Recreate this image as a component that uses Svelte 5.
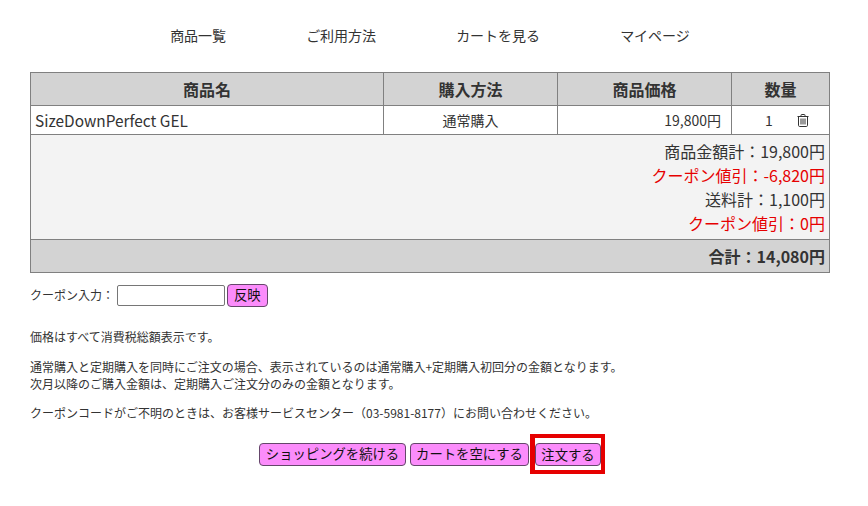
<script>
	let coupon = $state('');
</script>

<div class="page">
	<nav>
		<a href="#list">商品一覧</a>
		<a href="#guide">ご利用方法</a>
		<a href="#cart">カートを見る</a>
		<a href="#mypage">マイページ</a>
	</nav>

	<table>
		<colgroup>
			<col class="c1" />
			<col class="c2" />
			<col class="c3" />
			<col class="c4" />
		</colgroup>
		<thead>
			<tr>
				<th>商品名</th>
				<th>購入方法</th>
				<th>商品価格</th>
				<th>数量</th>
			</tr>
		</thead>
		<tbody>
			<tr class="item">
				<td class="name">SizeDownPerfect GEL</td>
				<td class="center">通常購入</td>
				<td class="right">19,800円</td>
				<td>
					<div class="qty">
						<span>1</span>
						<svg viewBox="0 0 12 13" width="12" height="13" fill="none" stroke="#333" stroke-width="1" aria-hidden="true">
							<path d="M0.5 2.5h11M4 2.5V1.2Q4 .5 4.7 .5h2.6Q8 .5 8 1.2v1.3M1.5 2.5v8.8q0 1.2 1.2 1.2h6.6q1.2 0 1.2-1.2V2.5M4 4.5v6M6 4.5v6M8 4.5v6" />
						</svg>
					</div>
				</td>
			</tr>
			<tr class="summary">
				<td colspan="4">
					<div>商品金額計：19,800円</div>
					<div class="red">クーポン値引：-6,820円</div>
					<div>送料計：1,100円</div>
					<div class="red">クーポン値引：0円</div>
				</td>
			</tr>
			<tr class="total">
				<td colspan="4">合計：14,080円</td>
			</tr>
		</tbody>
	</table>

	<div class="coupon">
		<label for="coupon">クーポン入力：</label>
		<input id="coupon" type="text" bind:value={coupon} />
		<button>反映</button>
	</div>

	<div class="notes">
		<p>価格はすべて消費税総額表示です。</p>
		<p>通常購入と定期購入を同時にご注文の場合、表示されているのは通常購入+定期購入初回分の金額となります。<br />次月以降のご購入金額は、定期購入ご注文分のみの金額となります。</p>
		<p>クーポンコードがご不明のときは、お客様サービスセンター（03-5981-8177）にお問い合わせください。</p>
	</div>

	<div class="actions">
		<button class="keep">ショッピングを続ける</button>
		<button class="empty">カートを空にする</button>
		<span class="highlight"><button class="order">注文する</button></span>
	</div>
</div>

<style>
	:global(body) {
		margin: 0;
		background: #fff;
		color: #333;
		font-family: "Noto Sans CJK JP", "Noto Sans", sans-serif;
	}
	.page {
		width: 800px;
		margin-left: 30px;
	}
	nav {
		display: flex;
		justify-content: center;
		gap: 80px;
		padding-top: 25px;
		height: 47px;
		font-size: 14px;
		line-height: 20px;
	}
	nav a {
		color: #333;
		text-decoration: none;
	}
	table {
		width: 800px;
		border-collapse: collapse;
		table-layout: fixed;
		box-sizing: border-box;
	}
	.c1 { width: 353px; }
	.c2 { width: 174px; }
	.c3 { width: 174px; }
	th, td {
		border: 1px solid #808080;
		padding: 0 5px;
	}
	th {
		height: 32px;
		background: #d3d3d3;
		font-size: 16px;
		font-weight: 700;
	}
	.item td {
		height: 28px;
		font-size: 14px;
	}
	.item .name {
		padding-left: 4px;
		font-size: 15.4px;
	}
	.center {
		text-align: center;
	}
	.right {
		text-align: right;
		padding-right: 10px;
	}
	.qty {
		display: flex;
		justify-content: center;
		align-items: center;
		gap: 24px;
		padding-left: 13px;
	}
	.qty svg {
		margin-top: 1px;
	}
	.summary td {
		height: 104px;
		padding: 0 4px;
		background: #f3f3f3;
		text-align: right;
		font-size: 16px;
		line-height: 24px;
	}
	.red {
		color: #e60000;
	}
	.total td {
		height: 32px;
		padding: 0 4px;
		background: #d3d3d3;
		text-align: right;
		font-size: 16px;
		font-weight: 700;
	}
	.coupon {
		display: flex;
		align-items: center;
		margin-top: 10px;
		height: 24px;
		font-size: 12px;
	}
	.coupon label {
		width: 87px;
		margin-top: -2px;
	}
	.coupon input {
		box-sizing: border-box;
		width: 108px;
		height: 21px;
		margin-right: 2px;
		padding: 0 2px;
		border: 1px solid #767676;
		border-radius: 2px;
	}
	button {
		height: 23px;
		padding: 0 6px;
		border: 1px solid #65466b;
		border-radius: 4px;
		background: #fb8cfb;
		color: #111;
		font-family: inherit;
		font-size: 13.33px;
		line-height: 1;
	}
	.keep,
	.empty,
	.order {
		padding: 0;
	}
	.keep { width: 147px; }
	.empty { width: 119px; }
	.order { width: 66px; }
	.notes {
		margin-top: 21px;
		font-size: 12px;
		line-height: 17px;
	}
	.notes p {
		margin: 0 0 12px;
	}
	.notes p:first-child {
		margin-bottom: 13px;
	}
	.actions {
		display: flex;
		justify-content: center;
		align-items: center;
		gap: 4px;
		margin-top: 13px;
	}
	.highlight {
		display: flex;
		padding: 5px 0 4px;
		border: 4px solid #e60000;
		border-left-width: 5px;
		margin: 0 -4px 0 -3px;
	}
</style>
